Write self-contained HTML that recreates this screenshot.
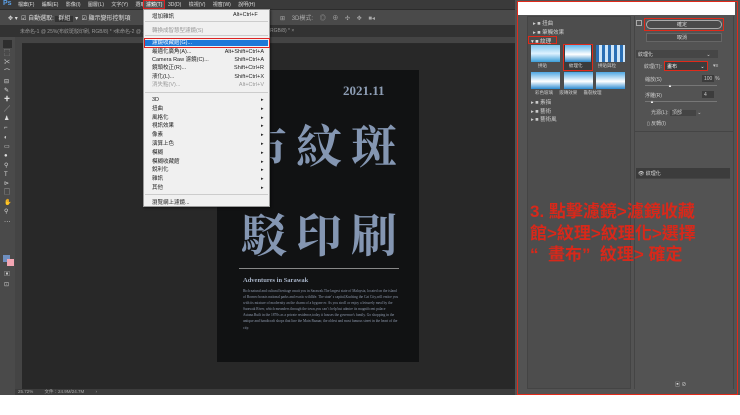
<!DOCTYPE html>
<html><head><meta charset="utf-8"><style>
*{margin:0;padding:0;box-sizing:border-box}
body{width:740px;height:415px;background:#fff;position:relative;overflow:hidden;font-family:"Liberation Sans","Noto Sans CJK TC",sans-serif;font-size:6px;color:#ccc}
div{position:absolute}
.t{white-space:nowrap}
</style></head><body>
<!-- menubar -->
<div style="left:0;top:0;width:740px;height:9px;background:#3a3a3a"></div>
<div class="t" style="left:3px;top:0;color:#5ca0e6;font-size:7px;font-weight:bold">Ps</div>
<div class="t" style="left:18px;top:1px;font-size:5px;color:#ddd;word-spacing:6px">檔案(F) 編輯(E) 影像(I) 圖層(L) 文字(Y) 選取(S)</div>
<div style="left:143px;top:0;width:22px;height:9px;background:#555;border:1px solid #d22"></div>
<div class="t" style="left:146px;top:1px;font-size:5px;color:#fff">濾鏡(T)</div>
<div class="t" style="left:168px;top:1px;font-size:5px;color:#ddd;word-spacing:6px">3D(D) 檢視(V) 視窗(W) 說明(H)</div>
<!-- options -->
<div style="left:0;top:9px;width:740px;height:16px;background:#4a4a4a;border-top:1px solid #2c2c2c"></div>
<div class="t" style="left:8px;top:13px;font-size:6px;color:#ddd">✥ ▾ &nbsp;☑ 自動選取: <span style="background:#333;padding:0 3px">群組</span> ▾ &nbsp;☑ 顯示變形控制項</div>
<div class="t" style="left:280px;top:13px;font-size:6px;color:#aaa;word-spacing:5px">⊞ 3D模式: ◎ ⊕ ✣ ✥ ■◂</div>
<!-- tabs -->
<div style="left:0;top:25px;width:515px;height:12px;background:#323232"></div>
<div class="t" style="left:20px;top:28px;font-size:5px;color:#999">未命名-1 @ 25%(布紋斑駁印刷, RGB/8) * ×</div>
<div class="t" style="left:115px;top:28px;font-size:5px;color:#999">未命名-2 @ ...</div>
<div class="t" style="left:270px;top:28px;font-size:5px;color:#999">RGB/8) * ×</div>
<!-- ruler -->
<div style="left:15px;top:37px;width:500px;height:7px;background:#444;border-bottom:1px solid #2a2a2a"></div>
<div style="left:15px;top:37px;width:7px;height:352px;background:#444"></div>
<!-- toolbar -->
<div style="left:0;top:37px;width:15px;height:358px;background:#4a4a4a"></div>
<div style="left:3px;top:40px;width:9px;height:8px;background:#2e2e2e"></div>
<div class="t" style="left:4px;top:50px;font-size:6px;line-height:9.3px;color:#ddd;white-space:pre">⬚
✂
⌒
⊟
✎
✚
╱
♟
⌐
◐
▭
●
⚲
T
⊳
▢
✋
⚲
⋯</div>
<div style="left:3px;top:255px;width:7px;height:7px;background:#6e8fc0"></div>
<div style="left:7px;top:259px;width:7px;height:7px;background:#f3a6b3"></div>
<div class="t" style="left:4px;top:270px;font-size:6px;line-height:10px;color:#ccc;white-space:pre">▣
⊡</div>
<!-- canvas -->
<div style="left:22px;top:44px;width:493px;height:345px;background:#282828"></div>
<!-- document -->
<div style="left:217px;top:70px;width:202px;height:292px;background:#111213"></div>
<div class="t" style="left:343px;top:83px;font-family:'Liberation Serif',serif;font-weight:bold;font-size:13px;color:#8d9db4">2021.11</div>
<div class="t" style="left:241px;top:111px;font-family:'Liberation Serif','Noto Serif CJK SC',serif;font-weight:bold;font-size:46px;letter-spacing:9px;color:#8496b2">布紋斑</div>
<div class="t" style="left:241px;top:200px;font-family:'Liberation Serif','Noto Serif CJK SC',serif;font-weight:bold;font-size:46px;letter-spacing:9px;color:#8496b2">駁印刷</div>
<div style="left:239px;top:268px;width:160px;height:1px;background:#888"></div>
<div class="t" style="left:243px;top:277px;font-family:'Liberation Serif',serif;font-weight:bold;font-size:6.5px;color:#a8b4c8">Adventures in Sarawak</div>
<div style="left:243px;top:288px;width:156px;font-family:'Liberation Serif',serif;font-size:3.6px;line-height:6.1px;color:#8e99ad;white-space:normal">Rich natural and cultural heritage await you in Sarawak.The largest state of Malaysia, located on the island of Borneo boasts national parks and exotic wildlife. The state' s capital,Kuching the Cat City,will entice you with its mixture of modernity an the charm of a bygone er. As you stroll or enjoy a leisurely meal by the Sarawak River, which meanders through the town,you can' t help but admire its magnificent palace Astana.Built in the 1870s as a private residence,today it houses the governor's family. Go shopping in the antique and handicraft shops that line the Main Bazaar, the oldest and most famous street in the heart of the city.</div>
<!-- status -->
<div style="left:15px;top:389px;width:500px;height:6px;background:#3c3c3c"></div>
<div class="t" style="left:18px;top:389px;font-size:4.5px;color:#aaa">25.72% &nbsp; &nbsp; &nbsp; &nbsp; 文件：24.9M/24.7M &nbsp; &nbsp; &nbsp; &nbsp; ›</div>
<!-- dropdown menu -->
<div style="left:143px;top:9px;width:127px;height:198px;background:#f0f0f0;border:1px solid #999;box-shadow:1px 1px 2px rgba(0,0,0,.5)"></div>
<div class="t" style="left:152px;top:12px;font-size:5.5px;color:#222">增加雜訊</div>
<div class="t" style="left:233px;top:12px;font-size:5.5px;color:#222">Alt+Ctrl+F</div>
<div style="left:145px;top:21px;width:123px;height:1px;background:#ccc"></div>
<div class="t" style="left:152px;top:26px;font-size:5.5px;color:#999">轉換成智慧型濾鏡(S)</div>
<div style="left:145px;top:35px;width:123px;height:1px;background:#ccc"></div>
<div style="left:144px;top:38px;width:126px;height:10px;border:1px solid #d22"></div>
<div style="left:145px;top:40px;width:123px;height:6px;background:#1e78d8"></div>
<div class="t" style="left:152px;top:40px;font-size:5.5px;line-height:6px;color:#fff">濾鏡收藏館(G)...</div>
<div class="t" style="left:152px;top:48px;font-size:5.5px;line-height:8.2px;color:#222;white-space:pre">最適化廣角(A)...
Camera Raw 濾鏡(C)...
鏡頭校正(R)...
液化(L)...
<span style="color:#999">消失點(V)...</span></div>
<div class="t" style="left:216px;top:48px;width:48px;text-align:right;font-size:5.5px;line-height:8.2px;color:#222;white-space:pre">Alt+Shift+Ctrl+A
Shift+Ctrl+A
Shift+Ctrl+R
Shift+Ctrl+X
<span style="color:#999">Alt+Ctrl+V</span></div>
<div style="left:145px;top:92px;width:123px;height:1px;background:#ccc"></div>
<div class="t" style="left:152px;top:96px;font-size:5.5px;line-height:8.8px;color:#222;white-space:pre">3D
扭曲
風格化
視訊效果
像素
演算上色
模糊
模糊收藏館
銳利化
雜訊
其他</div>
<div class="t" style="left:261px;top:96px;font-size:5px;line-height:8.8px;color:#222;white-space:pre">▸
▸
▸
▸
▸
▸
▸
▸
▸
▸
▸</div>
<div style="left:145px;top:194px;width:123px;height:1px;background:#ccc"></div>
<div class="t" style="left:152px;top:198px;font-size:5.5px;color:#222">瀏覽網上濾鏡...</div>
<!-- dialog -->
<div style="left:515px;top:0;width:225px;height:395px;background:#535353"></div>
<div style="left:517px;top:2px;width:218px;height:13px;background:#fff"></div>
<div style="left:517px;top:1px;width:221px;height:394px;border:1px solid #e02a1a"></div>
<div style="left:527px;top:16px;width:104px;height:373px;background:#4d4d4d;border:1px solid #444"></div>
<div style="left:634px;top:16px;width:100px;height:373px;background:#535353;border-left:1px solid #454545;border-right:1px solid #454545"></div>
<div class="t" style="left:533px;top:20px;font-size:5.5px;line-height:8.5px;color:#ccc;white-space:pre">▸ ■ 扭曲
▸ ■ 筆觸效果</div>
<div style="left:528px;top:36px;width:29px;height:8px;border:1px solid #e02a1a"></div>
<div class="t" style="left:531px;top:37px;font-size:5.5px;color:#ddd">▾ ■ 紋理</div>
<div style="left:531px;top:45px;width:29px;height:17px;background:linear-gradient(#7ec3ec,#dff2ff 50%,#3c9ed8)"></div>
<div style="left:563px;top:44px;width:30px;height:27px;border:1px solid #e02a1a;background:#3a3a3a"></div>
<div style="left:565px;top:45px;width:26px;height:17px;background:linear-gradient(#5fb4ea,#ffffff 55%,#2d88c8)"></div>
<div style="left:596px;top:45px;width:29px;height:17px;background:repeating-linear-gradient(90deg,#2a6fb5 0 3px,#cfe6f8 3px 6px)"></div>
<div class="t" style="left:538px;top:63px;font-size:4.5px;color:#ccc">拼貼</div>
<div class="t" style="left:569px;top:63px;font-size:4.5px;color:#ddd">紋理化</div>
<div class="t" style="left:598px;top:63px;font-size:4.5px;color:#ccc">拼貼與粒</div>
<div style="left:531px;top:72px;width:29px;height:17px;background:linear-gradient(#4fa7e2,#fff 55%,#2c8ad0)"></div>
<div style="left:564px;top:72px;width:29px;height:17px;background:linear-gradient(#4fa7e2,#fff 55%,#2c8ad0)"></div>
<div style="left:596px;top:72px;width:29px;height:17px;background:linear-gradient(#4fa7e2,#fff 55%,#2c8ad0)"></div>
<div class="t" style="left:535px;top:90px;font-size:4.5px;color:#ccc">彩色玻璃 &nbsp; &nbsp; 嵌磚效果 &nbsp; &nbsp; 龜裂紋理</div>
<div class="t" style="left:531px;top:99px;font-size:5.5px;line-height:8.5px;color:#ccc;white-space:pre">▸ ■ 素描
▸ ■ 藝術
▸ ■ 藝術風</div>
<div style="left:636px;top:20px;width:6px;height:6px;border:1px solid #aaa"></div>
<div style="left:644px;top:18px;width:80px;height:13px;border:1px solid #e02a1a"></div>
<div style="left:646px;top:20px;width:76px;height:9px;border:1px solid #aaa;border-radius:5px;background:#4a4a4a"></div>
<div class="t" style="left:677px;top:21px;font-size:5px;color:#ddd">確定</div>
<div style="left:646px;top:33px;width:76px;height:9px;border:1px solid #666;background:#4a4a4a"></div>
<div class="t" style="left:677px;top:34px;font-size:5px;color:#ddd">取消</div>
<div style="left:636px;top:50px;width:82px;height:8px;background:#464646"></div>
<div class="t" style="left:638px;top:51px;font-size:5px;color:#ddd">紋理化 <span style="margin-left:52px">⌄</span></div>
<div class="t" style="left:644px;top:63px;font-size:5px;color:#ccc">紋理(T):</div>
<div style="left:664px;top:61px;width:44px;height:10px;border:1px solid #e02a1a;background:#3c3c3c"></div>
<div class="t" style="left:667px;top:63px;font-size:5px;color:#fff">畫布 <span style="margin-left:22px">⌄</span></div>
<div class="t" style="left:713px;top:63px;font-size:5px;color:#ccc">▾≡</div>
<div class="t" style="left:645px;top:76px;font-size:5px;color:#ccc">縮放(S)</div>
<div style="left:702px;top:75px;width:12px;height:7px;background:#3c3c3c"></div>
<div class="t" style="left:704px;top:76px;font-size:5px;color:#ccc">100 &nbsp;%</div>
<div style="left:645px;top:85px;width:72px;height:1px;background:#777"></div>
<div class="t" style="left:668px;top:83px;font-size:4px;color:#fff">▲</div>
<div class="t" style="left:645px;top:92px;font-size:5px;color:#ccc">浮雕(R)</div>
<div style="left:702px;top:91px;width:12px;height:7px;background:#3c3c3c"></div>
<div class="t" style="left:704px;top:92px;font-size:5px;color:#ccc">4</div>
<div style="left:645px;top:101px;width:72px;height:1px;background:#777"></div>
<div class="t" style="left:650px;top:99px;font-size:4px;color:#fff">▲</div>
<div class="t" style="left:651px;top:109px;font-size:5px;color:#ccc">光源(L): <span style="background:#444;padding:0 14px 0 2px">頂部</span> ⌄</div>
<div class="t" style="left:647px;top:120px;font-size:5px;color:#ccc">▯ 反轉(I)</div>
<div style="left:635px;top:131px;width:98px;height:1px;background:#454545"></div>
<div style="left:636px;top:168px;width:94px;height:10px;background:#3c3c3c"></div>
<div class="t" style="left:638px;top:170px;font-size:5px;color:#ddd">👁 紋理化</div>
<div style="left:636px;top:178px;width:94px;height:1px;background:#454545"></div>
<div class="t" style="left:530px;top:201px;font-size:17px;line-height:21.5px;color:#d8281a;font-weight:bold;white-space:pre">3. 點擊濾鏡&gt;濾鏡收藏
館&gt;紋理&gt;紋理化&gt;選擇
“  畫布”  紋理&gt; 確定</div>
<div class="t" style="left:675px;top:381px;font-size:5px;color:#ddd">▣ ⊘</div>
</body></html>
